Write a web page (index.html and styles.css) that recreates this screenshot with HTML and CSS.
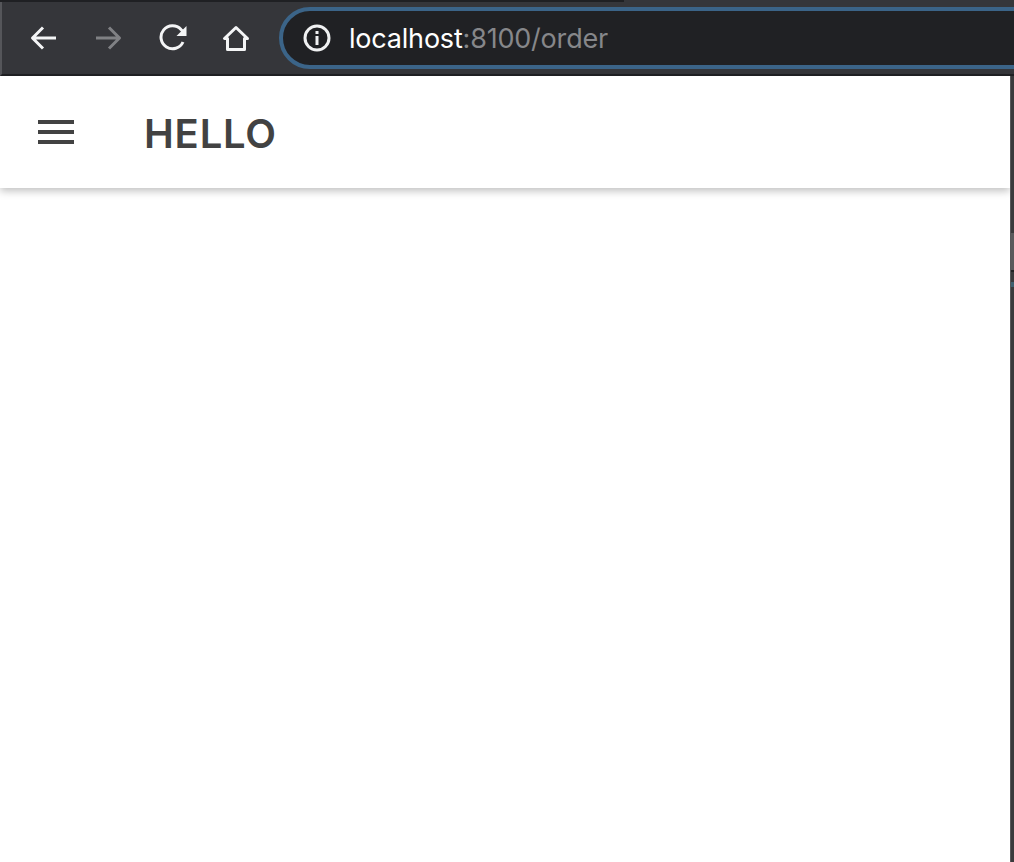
FILE: index.html
```html
<!DOCTYPE html>
<html lang="en">
<head>
    <meta charset="UTF-8">
    <meta name="viewport" content="width=device-width, initial-scale=1.0">
    <title>HELLO</title>
    <link rel="stylesheet" href="styles.css">
</head>
<body>
    <div class="tab-strip">
        <div class="tab-edge"></div>
    </div>
    <div class="browser-toolbar">
        <div class="nav-icons">
            <svg class="nav-icon" viewBox="0 0 28 28"><path d="M26 14H3M13 3.500 2.500 14 13 24.500"/></svg>
            <svg class="nav-icon disabled" viewBox="0 0 28 28"><path d="M2 14H25M15 3.500 25.500 14 15 24.500"/></svg>
            <svg class="nav-icon reload" viewBox="0 0 28 28"><path d="M24 18A11.500 11.500 0 1 1 22 5.500L25.500 9"/><path class="fill" d="M27.500 2V12H17.500Z"/></svg>
            <svg class="nav-icon" viewBox="0 0 28 28"><path d="M14 3.500 2.500 14.500H5.500V25.500H22.500V14.500H25.500Z"/></svg>
        </div>
        <div class="url-bar">
            <svg class="info-icon" viewBox="0 0 28 28">
                <circle class="ring" cx="14" cy="14" r="12"/>
                <rect class="dot" x="12.500" y="7" width="3" height="3"/>
                <rect class="dot" x="12.500" y="12" width="3" height="9"/>
            </svg>
            <span class="url-host">localhost</span><span class="url-rest">:8100/order</span>
        </div>
    </div>
    <div class="page">
        <div class="app">
            <header class="app-header">
                <div class="menu-icon">
                    <span></span>
                    <span></span>
                    <span></span>
                </div>
                <h1 class="app-title">HELLO</h1>
            </header>
        </div>
        <div class="window-edge">
            <div class="edge-thumb"></div>
            <div class="edge-mark"></div>
            <div class="edge-dot"></div>
        </div>
    </div>
</body>
</html>
```

FILE: styles.css
```css
html, body {
    height: 100%;
}

body {
    margin: 0;
    display: flex;
    flex-direction: column;
    overflow: hidden;
    background-color: #ffffff;
    font-family: 'Inter', sans-serif;
}

.tab-strip {
    height: 2px;
    background-color: #35363a;
}

.tab-edge {
    width: 624px;
    height: 2px;
    background-color: #1f2023;
}

.browser-toolbar {
    height: 72px;
    display: flex;
    align-items: center;
    padding-left: 30px;
    background-color: #35363a;
    border-bottom: 2px solid #202124;
    border-left: 2px solid #55565a;
    overflow: hidden;
}

.nav-icons {
    display: flex;
    gap: 36px;
    margin-left: -2px;
}

.nav-icon {
    width: 28px;
    height: 28px;
    fill: none;
    stroke: #f4f5f6;
    stroke-width: 3;
    stroke-linejoin: round;
}

.nav-icon.disabled {
    stroke: #808184;
}

.nav-icon.reload {
    transform: translateX(1px);
}

.nav-icon .fill {
    fill: #f4f5f6;
    stroke: none;
}

.url-bar {
    flex: none;
    width: 900px;
    height: 54px;
    margin-left: 29px;
    display: flex;
    align-items: center;
    padding-left: 20px;
    background-color: #202124;
    border: 4px solid #3b6488;
    border-radius: 31px;
    font-size: 27px;
    letter-spacing: -0.2px;
}

.info-icon {
    width: 28px;
    height: 28px;
    margin-right: 18px;
}

.info-icon .ring {
    fill: none;
    stroke: #f0f1f2;
    stroke-width: 3;
}

.info-icon .dot {
    fill: #f0f1f2;
}

.url-host {
    color: #ffffff;
}

.url-rest {
    color: #86878a;
}

.page {
    flex: 1;
    display: flex;
}

.app {
    flex: 1;
}

.app-header {
    height: 112px;
    display: flex;
    align-items: center;
    background-color: #ffffff;
    box-shadow: 0 3px 8px rgba(0, 0, 0, 0.25);
}

.menu-icon {
    width: 36px;
    margin-left: 38px;
    display: flex;
    flex-direction: column;
    gap: 6px;
}

.menu-icon span {
    height: 4px;
    background-color: #424242;
}

.app-title {
    margin: 2px 0 0 70px;
    font-size: 40px;
    font-weight: 600;
    letter-spacing: 0.8px;
    color: #424242;
}

.window-edge {
    width: 4px;
    background-color: #3a3a3c;
    border-left: 1px solid #58585a;
    box-sizing: border-box;
    z-index: 1;
}

.edge-thumb {
    height: 37px;
    margin-top: 157px;
    background-color: #5a5a5c;
}

.edge-mark {
    height: 2px;
    background-color: #222224;
}

.edge-dot {
    height: 5px;
    margin-top: 10px;
    background-color: #3f6070;
}
```
